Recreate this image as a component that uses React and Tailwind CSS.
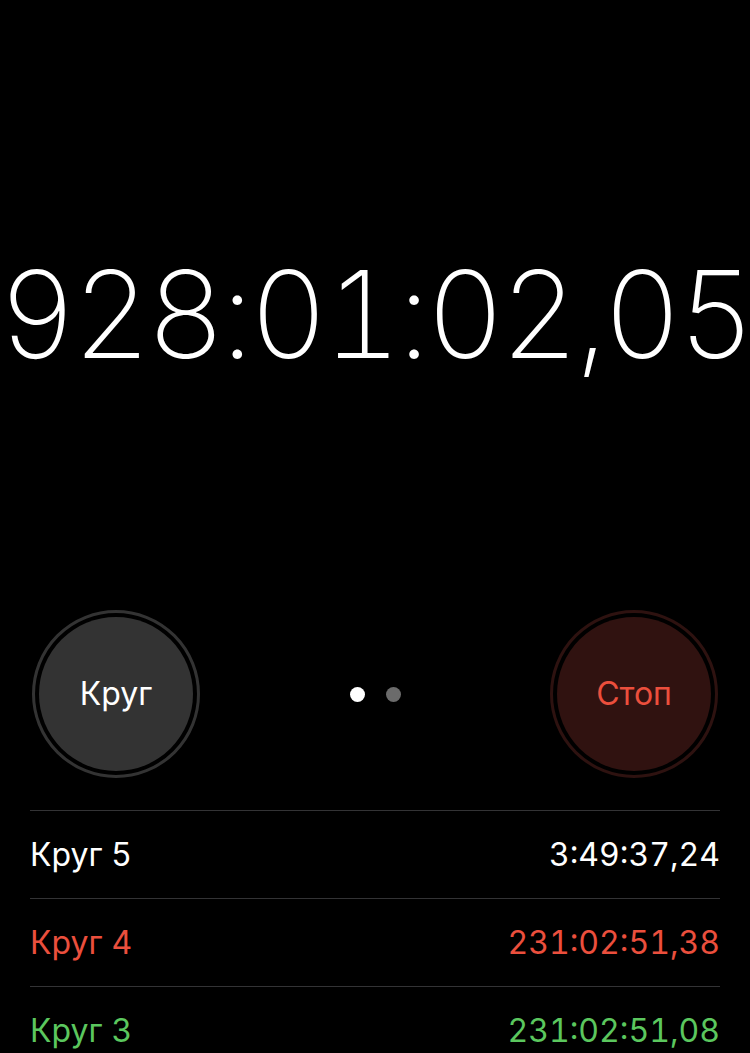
import React from "react";

const laps = [
  { label: "Круг 5", time: "3:49:37,24", color: "text-white" },
  { label: "Круг 4", time: "231:02:51,38", color: "text-[#eb4f3d]" },
  { label: "Круг 3", time: "231:02:51,08", color: "text-[#5bc75e]" },
];

function RoundButton({ label, ring, fill, text }) {
  return (
    <div className={`w-[168px] h-[168px] rounded-full border-[3px] p-[4px] ${ring}`}>
      <div className={`w-full h-full rounded-full flex items-center justify-center ${fill}`}>
        <span className={`text-[32px] ${text}`}>{label}</span>
      </div>
    </div>
  );
}

export default function App() {
  return (
    <div
      className="w-[750px] h-[1053px] bg-black overflow-hidden text-white"
      style={{ fontFamily: "Inter, Roboto, 'Noto Sans', sans-serif" }}
    >
      {/* main timer readout */}
      <div className="h-[610px] flex items-center justify-center pt-[18px]">
        <div className="text-[121px] leading-none font-extralight tabular-nums tracking-[-4px] whitespace-nowrap">
          928:01:02,05
        </div>
      </div>

      {/* controls */}
      <div className="flex items-center justify-between px-[32px]">
        <RoundButton label="Круг" ring="border-[#333333]" fill="bg-[#333333]" text="text-white" />
        <div className="flex items-center gap-[21px]">
          <div className="w-[15px] h-[15px] rounded-full bg-white" />
          <div className="w-[15px] h-[15px] rounded-full bg-[#6b6b6b]" />
        </div>
        <RoundButton label="Стоп" ring="border-[#2e1210]" fill="bg-[#301210]" text="text-[#eb4f3d]" />
      </div>

      {/* lap list */}
      <div className="mt-[32px] mx-[30px]">
        {laps.map((lap) => (
          <div
            key={lap.label}
            className={`h-[88px] border-t border-[#333335] flex items-center justify-between text-[32px] ${lap.color}`}
          >
            <span>{lap.label}</span>
            <span className="tabular-nums">{lap.time}</span>
          </div>
        ))}
      </div>
    </div>
  );
}
